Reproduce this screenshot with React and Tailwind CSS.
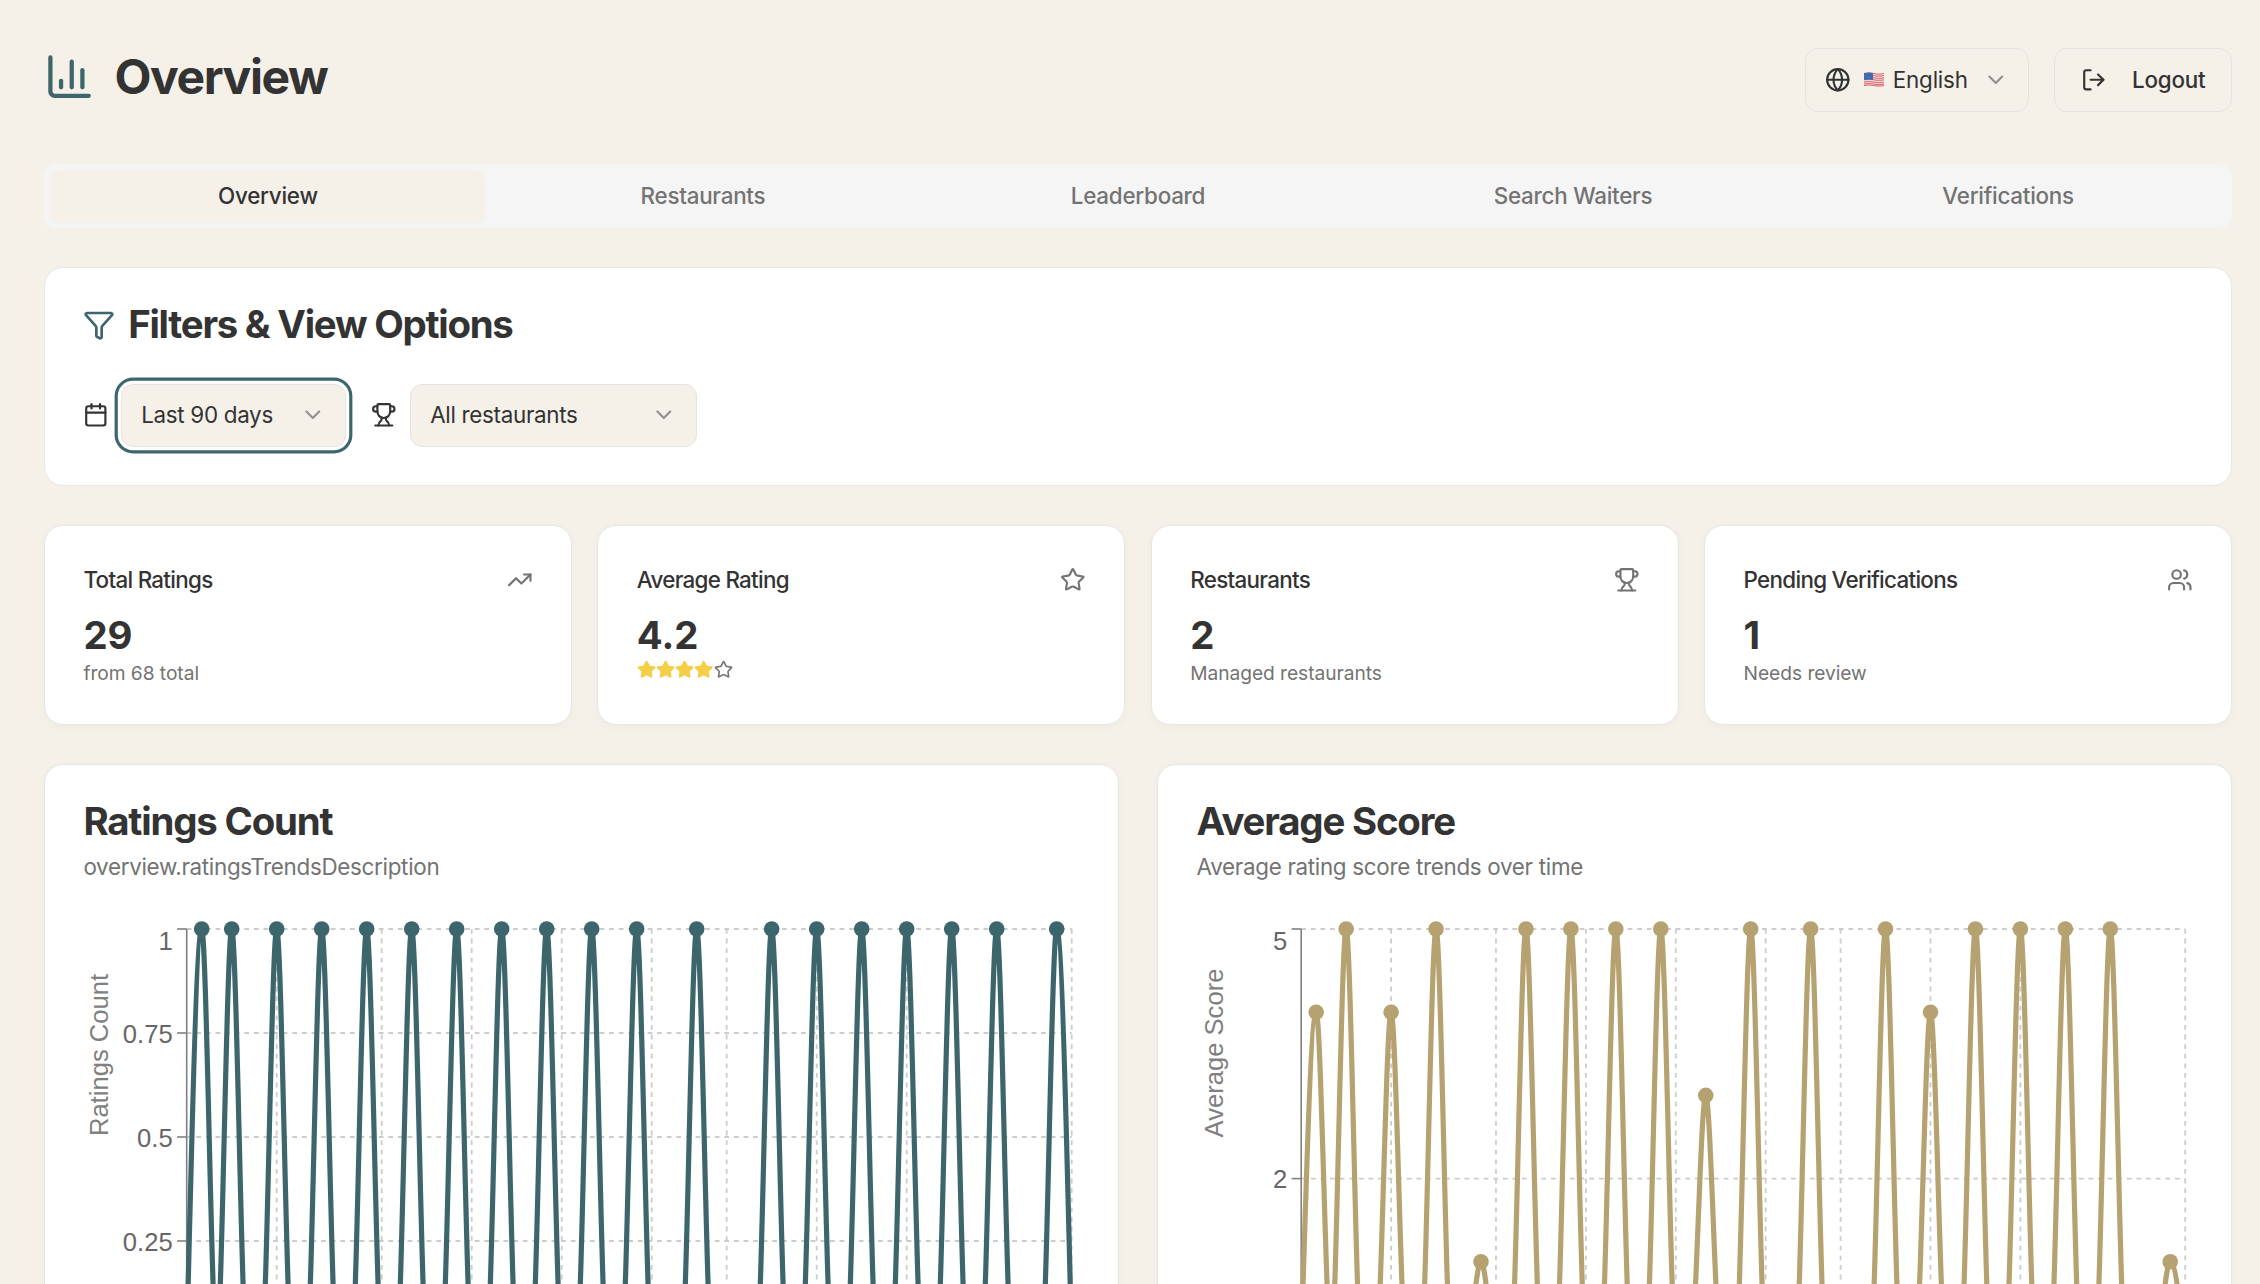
import React from "react";
import {
  Calendar,
  ChartColumn,
  ChevronDown,
  Funnel,
  Globe,
  LogOut,
  Star,
  TrendingUp,
  Trophy,
  Users,
} from "lucide-react";

const peakDays = [1, 3, 6, 9, 12, 15, 18, 21, 24, 27, 30, 34, 39, 42, 45, 48, 51, 54, 58];
const gridDays = [6, 13, 19, 25, 31, 36, 42, 48, 59];
const scoreValues = [4, 5, 4, 5, 1, 5, 5, 5, 5, 3, 5, 5, 5, 4, 5, 5, 5, 5, 1];
const tabs = ["Overview", "Restaurants", "Leaderboard", "Search Waiters", "Verifications"];

function buildSeries(values) {
  const series = Array(60).fill(0);
  peakDays.forEach((day, i) => {
    series[day] = values[i];
  });
  return series;
}

function Chart({ series, color, max, ticks, plotX, plotWidth, label, labelX, labelY }) {
  const top = 8;
  const plotHeight = 416;
  const step = plotWidth / 59;
  const px = (i) => plotX + i * step;
  const py = (v) => top + plotHeight * (1 - v / max);

  let line = `M${px(0)},${py(series[0])}`;
  for (let i = 0; i < 59; i++) {
    const y0 = py(series[i]);
    const y1 = py(series[i + 1]);
    const c1 = i === 0 ? y0 + (y1 - y0) / 2 : y0;
    const c2 = i === 58 ? y1 - (y1 - y0) / 2 : y1;
    line += `C${px(i) + step / 3},${c1} ${px(i + 1) - step / 3},${c2} ${px(i + 1)},${y1}`;
  }

  return (
    <svg width="100%" height="640" className="block [font-family:'Liberation_Sans',Arial,sans-serif]">
      {ticks.map((t) => (
        <line key={t} x1={plotX} x2={plotX + plotWidth} y1={py(t)} y2={py(t)} stroke="#ccc" strokeWidth="1.8" strokeDasharray="4.8 4.8" />
      ))}
      {gridDays.map((d) => (
        <line key={d} x1={px(d)} x2={px(d)} y1={top} y2={top + plotHeight} stroke="#ccc" strokeWidth="1.8" strokeDasharray="4.8 4.8" />
      ))}
      <line x1={plotX} x2={plotX} y1={top} y2={top + plotHeight} stroke="#808080" strokeWidth="1.6" />
      {ticks.map((t, i) => (
        <g key={t}>
          <line x1={plotX - 9.6} x2={plotX} y1={py(t)} y2={py(t)} stroke="#808080" strokeWidth="1.6" />
          <text x={plotX - 14} y={py(t) + (i === 0 ? 21 : 9.6)} textAnchor="end" fontSize="25.6" fill="#666">
            {t}
          </text>
        </g>
      ))}
      <text transform={`translate(${labelX} ${labelY}) rotate(-90)`} textAnchor="middle" fontSize="25.6" fill="#808080">
        {label}
      </text>
      <path d={line} fill="none" stroke={color} strokeWidth="5.2" />
      {series.map((v, i) => (
        <circle key={i} cx={px(i)} cy={py(v)} r="7.8" fill={color} />
      ))}
    </svg>
  );
}

function UsFlag() {
  return (
    <svg width="20" height="16" viewBox="0 0 20 16" className="shrink-0">
      <path d="M0 1q5 -1 10 0t10 0v13q-5 1 -10 0t-10 0z" fill="#f4dcdc" />
      {[1, 3.1, 5.2, 7.3, 9.4, 11.5, 13].map((y) => (
        <path key={y} d={`M0 ${y}q5 -1 10 0t10 0v1q-5 1 -10 0t-10 0z`} fill="#d9676f" />
      ))}
      <path d="M0 1q5 -1 9 0v7q-4 -1 -9 0z" fill="#3c6db0" />
    </svg>
  );
}

function SelectBox({ text, width, focused }) {
  return (
    <div
      className={`flex h-[63px] items-center justify-between rounded-[12px] border-[1.6px] border-[#e6e4df] bg-[#f5f1e9] pl-[19.6px] pr-[19.2px] text-[22.4px] tracking-[-0.3px] text-[#333] ${width} ${
        focused ? "ring-[3.2px] ring-[#3d666c] ring-offset-[3.2px] ring-offset-white" : ""
      }`}
    >
      <span>{text}</span>
      <ChevronDown size={25.6} className="text-[#333] opacity-50" />
    </div>
  );
}

function StatCard({ title, value, note, icon: Icon, stars }) {
  return (
    <div className="rounded-[19px] border-[1.6px] border-[#e8e6e1] bg-white px-[38.4px] pt-[37.6px] pb-[37.8px] shadow-[0_2px_8px_rgba(0,0,0,0.03)]">
      <div className="flex h-[32px] items-center justify-between text-[22.4px] font-medium tracking-[-0.7px] text-[#333]">
        <span>{title}</span>
        <Icon size={25.6} className="text-[#737373]" />
      </div>
      <div className="mt-[14px] text-[38.4px] leading-[51.2px] font-bold text-[#333]">{value}</div>
      {note && <div className="text-[19.2px] leading-[25.6px] tracking-[-0.05px] text-[#737373]">{note}</div>}
      {stars && (
        <div className="-mt-[1px] flex">
          {[1, 2, 3, 4, 5].map((n) => (
            <Star
              key={n}
              size={19.2}
              className={n <= 4 ? "fill-[#f5ce47] text-[#f5ce47]" : "text-[#737373]"}
            />
          ))}
        </div>
      )}
    </div>
  );
}

function ChartCard({ title, description, children }) {
  return (
    <div className="rounded-[19px] border-[1.6px] border-[#e8e6e1] bg-white p-[38.4px] pt-[37px] shadow-[0_2px_8px_rgba(0,0,0,0.03)]">
      <h2 className="text-[38.4px] leading-[38.4px] font-bold tracking-[-1.18px] text-[#333]">{title}</h2>
      <p className="mt-[10.6px] text-[22.4px] leading-[32px] tracking-[-0.3px] text-[#737373]">{description}</p>
      <div className="mt-[38px]">{children}</div>
    </div>
  );
}

export default function App() {
  return (
    <div className="h-screen overflow-hidden bg-[#f5f1e9] pt-[48px] pr-[28px] pl-[44px] [font-family:Inter,sans-serif]">
      <header className="flex items-start justify-between">
        <div className="flex items-center gap-[19.2px] pt-[3px]">
          <ChartColumn size={51.2} className="text-[#3d666c]" />
          <h1 className="text-[48px] leading-[51px] font-bold tracking-[-1.4px] text-[#333]">Overview</h1>
        </div>
        <div className="flex gap-[25.6px] text-[22.4px] font-medium tracking-[-0.2px] text-[#333]">
          <div className="flex h-[64px] items-center rounded-[13px] border-[1.6px] border-[#e4e3df] px-[19.2px]">
            <Globe size={25.6} />
            <span className="ml-[12.8px]">
              <UsFlag />
            </span>
            <span className="ml-[9px] font-normal">English</span>
            <ChevronDown size={25.6} className="ml-[15px] opacity-50" />
          </div>
          <div className="flex h-[64px] items-center gap-[25.6px] rounded-[13px] border-[1.6px] border-[#e4e3df] px-[25.6px]">
            <LogOut size={25.6} />
            <span>Logout</span>
          </div>
        </div>
      </header>

      <nav className="mt-[52px] grid h-[64px] grid-cols-5 rounded-[13px] bg-[#f5f5f5] p-[6.4px] text-[22.4px] font-medium tracking-[-0.25px] text-[#737373]">
        {tabs.map((tab, i) => (
          <div
            key={tab}
            className={`flex items-center justify-center rounded-[8px] ${i === 0 ? "bg-[#f5f1e9] text-[#333] shadow-[0_1px_2px_rgba(0,0,0,0.03)]" : ""}`}
          >
            {tab}
          </div>
        ))}
      </nav>

      <section className="mt-[39px] rounded-[19px] border-[1.6px] border-[#e8e6e1] bg-white px-[38.4px] pt-[37.4px] pb-[38.4px]">
        <div className="flex h-[38.4px] items-center gap-[12.8px]">
          <Funnel size={32} className="text-[#3d666c]" />
          <h2 className="text-[38.4px] font-bold tracking-[-1.25px] text-[#333]">Filters &amp; View Options</h2>
        </div>
        <div className="mt-[40px] flex items-center gap-[25.6px]">
          <div className="flex items-center gap-[11.6px]">
            <Calendar size={25.6} className="text-[#333]" />
            <SelectBox text="Last 90 days" width="w-[225px]" focused />
          </div>
          <div className="flex items-center gap-[12.8px]">
            <Trophy size={25.6} className="text-[#333]" />
            <SelectBox text="All restaurants" width="w-[287px]" />
          </div>
        </div>
      </section>

      <section className="mt-[39px] grid grid-cols-4 gap-[25.6px]">
        <StatCard title="Total Ratings" value="29" note="from 68 total" icon={TrendingUp} />
        <StatCard title="Average Rating" value="4.2" icon={Star} stars />
        <StatCard title="Restaurants" value="2" note="Managed restaurants" icon={Trophy} />
        <StatCard title="Pending Verifications" value="1" note="Needs review" icon={Users} />
      </section>

      <section className="mt-[39px] grid grid-cols-2 gap-[38.4px]">
        <ChartCard title="Ratings Count" description="overview.ratingsTrendsDescription">
          <Chart
            series={buildSeries(peakDays.map(() => 1))}
            color="#3d666c"
            max={1}
            ticks={[1, 0.75, 0.5, 0.25]}
            plotX={103.7}
            plotWidth={885}
            label="Ratings Count"
            labelX={25}
            labelY={134}
          />
        </ChartCard>
        <ChartCard title="Average Score" description="Average rating score trends over time">
          <Chart
            series={buildSeries(scoreValues)}
            color="#b5a270"
            max={5}
            ticks={[5, 2]}
            plotX={104.2}
            plotWidth={884}
            label="Average Score"
            labelX={26.4}
            labelY={132}
          />
        </ChartCard>
      </section>
    </div>
  );
}
